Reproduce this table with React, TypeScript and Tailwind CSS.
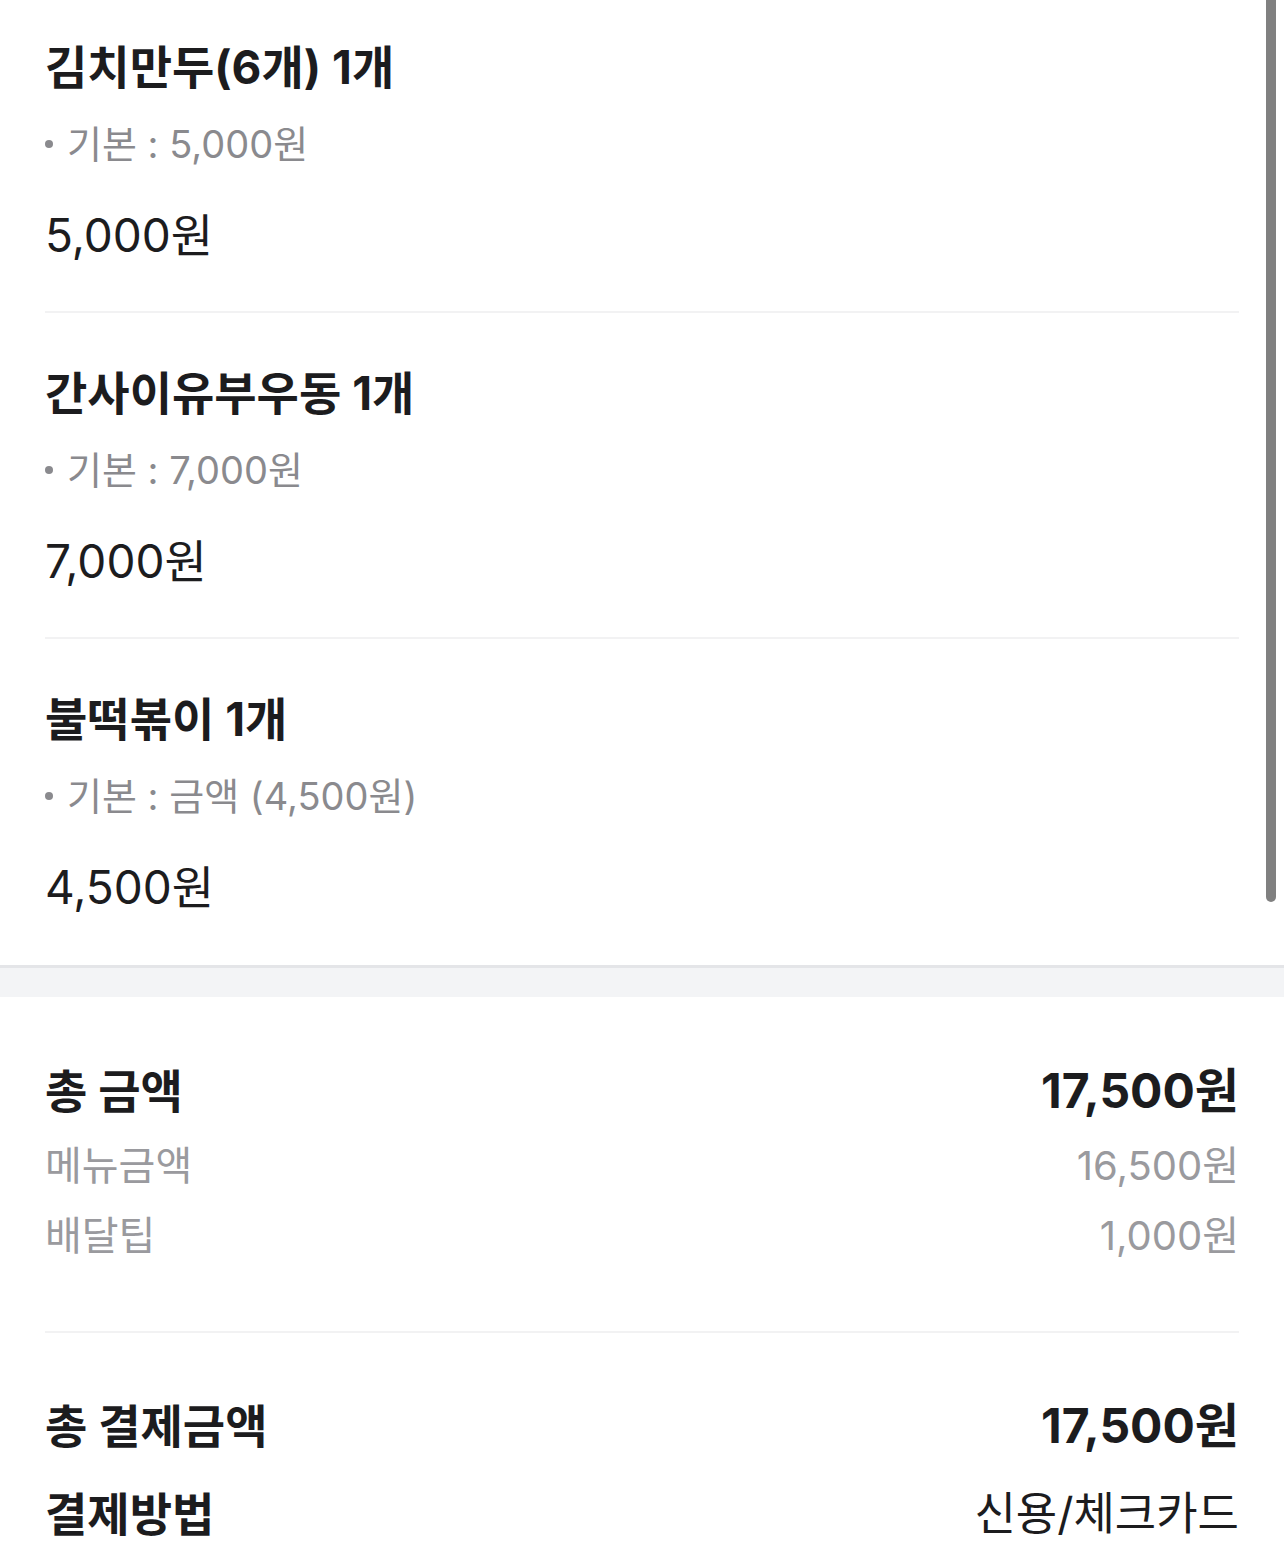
import React from "react";

const items = [
  { name: "김치만두(6개) 1개", opt: "기본 : 5,000원", price: "5,000원" },
  { name: "간사이유부우동 1개", opt: "기본 : 7,000원", price: "7,000원" },
  { name: "불떡볶이 1개", opt: "기본 : 금액 (4,500원)", price: "4,500원" },
];

export default function App() {
  return (
    <div
      className="relative w-[1284px] h-[1567px] overflow-hidden bg-white text-[#1c1c1e]"
      style={{ fontFamily: '"Inter", "Noto Sans CJK KR", sans-serif' }}
    >
      <div className="px-[45px]">
        {items.map((it, i) => (
          <div
            key={i}
            className={`${i === 0 ? "pt-[37px]" : "pt-[50px] border-t-2 border-[#f2f2f3]"} ${i === 2 ? "pb-[48px]" : "pb-[46px]"}`}
          >
            <div className="text-[46px] leading-[60px] font-bold">{it.name}</div>
            <div className="mt-[20px] flex items-center text-[38px] leading-[54px] text-[#8a8a8e]">
              <span className="inline-block w-[8px] h-[8px] rounded-full bg-[#8a8a8e] mr-[14px]" />
              <span>{it.opt}</span>
            </div>
            <div className="mt-[34px] text-[46px] leading-[60px]">{it.price}</div>
          </div>
        ))}
      </div>
      <div className="h-[32px] bg-[#f3f4f6] border-t-[3px] border-[#e4e5e8]" />
      <div className="px-[45px]">
        <div className="pt-[64px] pb-[70px] border-b-2 border-[#f2f2f3]">
          <div className="flex justify-between items-center h-[60px]">
            <span className="text-[46px] font-bold">총 금액</span>
            <span className="text-[48px] font-bold">17,500원</span>
          </div>
          <div className="mt-[20px] flex justify-between items-center h-[50px] text-[40px] text-[#9a9a9e]">
            <span>메뉴금액</span>
            <span>16,500원</span>
          </div>
          <div className="mt-[20px] flex justify-between items-center h-[50px] text-[40px] text-[#9a9a9e]">
            <span>배달팁</span>
            <span>1,000원</span>
          </div>
        </div>
        <div className="pt-[63px]">
          <div className="flex justify-between items-center h-[60px]">
            <span className="text-[46px] font-bold">총 결제금액</span>
            <span className="text-[48px] font-bold">17,500원</span>
          </div>
          <div className="mt-[28px] flex justify-between items-center h-[60px]">
            <span className="text-[46px] font-bold">결제방법</span>
            <span className="text-[45px]">신용/체크카드</span>
          </div>
        </div>
      </div>
      <div className="absolute right-[8px] top-0 w-[10px] h-[902px] rounded-b-full bg-[#808080]" />
    </div>
  );
}
